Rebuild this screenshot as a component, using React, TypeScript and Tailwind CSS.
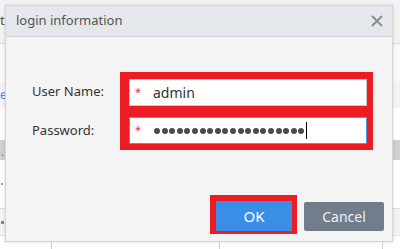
import React from "react";

const font = { fontFamily: '"Noto Sans", "Open Sans", Arial, sans-serif' };

function Background() {
  return (
    <div className="absolute inset-0 flex flex-col bg-white">
      <div className="h-[44px] bg-[#f2f2f2] border-b border-[#dcdcdc] flex items-center text-[13px] text-[#555]">
        <span className="-mt-[2px]">ti</span>
      </div>
      <div className="h-[38px] bg-[#fafafa]" />
      <div className="h-[26px] bg-[#f4f4f4] flex items-center text-[12px] text-[#3a8ee6]">e.</div>
      <div className="h-[32px] bg-white" />
      <div className="h-[20px] bg-[#cfcfcf] flex items-end text-[10px] text-[#666]">
        <span className="ml-[1px]">.</span>
      </div>
      <div className="h-[48px] bg-white flex items-center">
        <span className="ml-[1px] w-[2px] h-[2px] bg-[#6aaef0]" />
      </div>
      <div className="h-[27px] bg-[#f3f3f3] border-t border-[#dcdcdc] flex items-center">
        <span className="ml-[1px] w-[3px] h-[3px] bg-[#4a90e2]" />
      </div>
      <div className="flex-1 bg-white flex border-t border-[#e2e2e2]">
        <div className="w-[52px] border-r border-[#cfcfcf]" />
        <div className="w-[168px] border-r border-[#cfcfcf]" />
        <div className="w-[163px] border-r border-[#cfcfcf]" />
      </div>
    </div>
  );
}

function Dots({ n }: { n: number }) {
  return (
    <div className="flex items-center gap-[1.6px]">
      {Array.from({ length: n }).map((_, i) => (
        <span key={i} className="w-[6px] h-[6px] rounded-full bg-[#4a4a4a]" />
      ))}
    </div>
  );
}

export default function App() {
  return (
    <div className="relative w-[400px] h-[249px] overflow-hidden" style={font}>
      <Background />
      <div className="absolute left-[5px] top-[5px] w-[388px] h-[237px] flex flex-col border border-[#d6d6d6] bg-[#f4f4f4] shadow-[0_0_3px_rgba(0,0,0,0.15)]">
        <div className="h-[31px] shrink-0 bg-[#e4e7eb] border-b border-[#d3d6da] flex items-center justify-between pl-[10px] pr-[9px]">
          <span className="text-[13px] text-[#555]">login information</span>
          <svg width="12" height="12" viewBox="0 0 12 12">
            <path d="M1 1L11 11M11 1L1 11" stroke="#8a8a8a" strokeWidth="1.8" />
          </svg>
        </div>
        <div className="flex flex-col pt-[35px]">
          <div className="flex items-center">
            <div className="w-[114px] pl-[26px] text-[13px] text-[#333]">User Name:</div>
            <div className="w-[253px] h-[39px] bg-[#ed1c24] pt-[7px] pb-[5px] pl-[9px] pr-[6px]">
              <div className="h-full bg-white border border-[#c8c8c8] flex items-center relative">
                <span className="absolute left-[5px] top-[6px] text-[11px] leading-none text-[#f0304a]">*</span>
                <span className="ml-[23px] text-[14px] text-[#333]">admin</span>
              </div>
            </div>
          </div>
          <div className="flex items-center">
            <div className="w-[114px] pl-[26px] text-[13px] text-[#333]">Password:</div>
            <div className="w-[253px] h-[39px] bg-[#ed1c24] pt-[6px] pb-[6px] pl-[9px] pr-[6px]">
              <div className="h-full bg-white border border-[#4a9be0] flex items-center relative">
                <span className="absolute left-[5px] top-[6px] text-[11px] leading-none text-[#f0304a]">*</span>
                <div className="ml-[24px] flex items-center">
                  <Dots n={20} />
                  <span className="ml-[2px] w-[1px] h-[17px] bg-black" />
                </div>
              </div>
            </div>
          </div>
          <div className="flex justify-end items-start pr-[8px] mt-[45px] gap-[7px]">
            <div className="w-[87px] h-[39px] bg-[#ed1c24] pt-[6px] pl-[6px] pr-[5px] pb-[3px]">
              <div className="w-full h-full bg-[#3a8ee6] flex items-center justify-center text-[15px] text-white">OK</div>
            </div>
            <div className="mt-[7px] w-[80px] h-[29px] rounded-[2px] bg-[#717d8a] flex items-center justify-center text-[14px] text-[#eef0f2]">
              Cancel
            </div>
          </div>
        </div>
      </div>
    </div>
  );
}
